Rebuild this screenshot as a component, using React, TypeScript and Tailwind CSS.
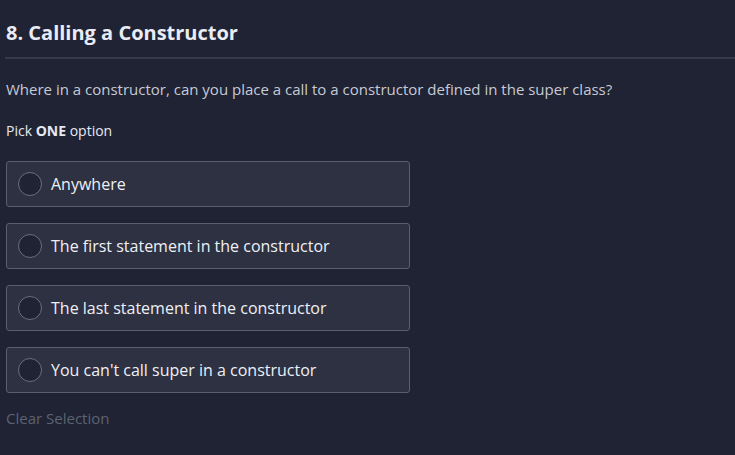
import React from "react";

const options = [
  "Anywhere",
  "The first statement in the constructor",
  "The last statement in the constructor",
  "You can't call super in a constructor",
];

export default function App() {
  return (
    <div
      className="w-[735px] h-[455px] bg-[#1f2333] text-[#e6e9f2] overflow-hidden"
      style={{ fontFamily: '"Open Sans", sans-serif' }}
    >
      <div className="pt-[19px]">
        <h1 className="pl-[6px] text-[20px] leading-[28px] font-bold text-[#e9ecf5]">
          8. Calling a Constructor
        </h1>
        <div className="ml-[5px] mt-[10px] h-[2px] bg-[#363a4a]" />
        <p className="pl-[6px] mt-[20px] text-[15px] leading-[20px] text-[#c7cad6]">
          Where in a constructor, can you place a call to a constructor defined in the super class?
        </p>
        <p className="pl-[6px] mt-[23px] text-[14px] leading-[18px] text-[#e6e9f2]">
          Pick <span className="font-bold">ONE</span> option
        </p>
        <div className="mt-[21px] pl-[6px] flex flex-col gap-[16px]">
          {options.map((o) => (
            <div
              key={o}
              className="w-[404px] h-[46px] rounded-[3px] border border-[#5a5f6e] bg-[#2d3141] flex items-center"
            >
              <span className="ml-[11px] w-[24px] h-[24px] rounded-full border border-[#6b7080] bg-[#1f2333] shrink-0" />
              <span className="ml-[9px] text-[16px] text-[#eef0f6]">{o}</span>
            </div>
          ))}
        </div>
        <p className="pl-[6px] mt-[14px] text-[15px] leading-[22px] text-[#5d6272]">
          Clear Selection
        </p>
      </div>
    </div>
  );
}
